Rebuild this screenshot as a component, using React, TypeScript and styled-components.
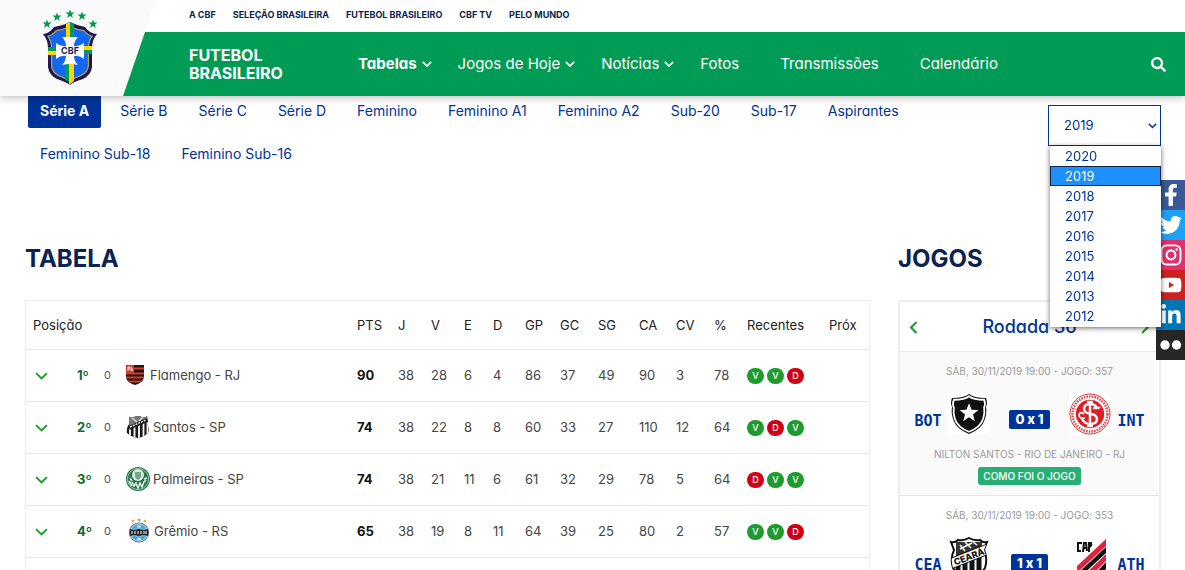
import React from "react";
import styled, { createGlobalStyle, css } from "styled-components";
import { FaSearch, FaFacebookF, FaTwitter, FaInstagram, FaYoutube, FaLinkedinIn } from "react-icons/fa";

const navy = "#0a2350";
const blue = "#003399";
const green = "#009b54";
const leaf = "#1e9b2e";

const GlobalStyle = createGlobalStyle`
  *, *::before, *::after { box-sizing: border-box; }
  body {
    margin: 0;
    background: #fff;
    color: #222;
    font-family: Inter, "Open Sans", sans-serif;
    font-feature-settings: "cv11", "calt" 0;
    font-size: 13px;
  }
  a { color: inherit; text-decoration: none; }
  ul { list-style: none; margin: 0; padding: 0; }
  button { font: inherit; border: 0; padding: 0; background: none; cursor: pointer; }
  svg { display: block; }
`;

/* ---------- header ---------- */

const Header = styled.header`
  position: relative;
  display: grid;
  grid-template-columns: 123px 1fr;
  grid-template-rows: 32px 64px;
  background: linear-gradient(#fff 32px, ${green} 32px);
  box-shadow: 0 2px 8px rgba(0, 0, 0, 0.25);
  z-index: 2;
`;

const LogoPanel = styled.div`
  position: absolute;
  top: 0;
  bottom: 0;
  left: 0;
  width: 156px;
  background: #fafafa;
  clip-path: polygon(0 0, 100% 0, 123px 100%, 0 100%);
`;

const LogoLink = styled.a`
  position: relative;
  grid-row: 1 / 3;
  padding: 10px 0 0 42px;
`;

const TopNav = styled.nav`
  display: flex;
  align-items: center;
  gap: 17px;
  padding: 0 0 2px 66px;
  color: ${navy};
  font-size: 9px;
  font-weight: 700;
  line-height: 12px;
`;

const MainBar = styled.div`
  display: flex;
  align-items: center;
  padding: 0 19px 0 66px;
  color: #fff;
`;

const SiteName = styled.a`
  width: 169px;
  font-size: 16px;
  line-height: 18px;
  font-weight: 700;
`;

const MainNav = styled.nav`
  display: flex;
  gap: 26px;
  font-size: 15px;
  line-height: 20px;
`;

const MainLink = styled.a<{ $active?: boolean }>`
  display: flex;
  align-items: center;
  gap: 5px;
  padding-right: 15px;
  font-weight: ${(p) => (p.$active ? 700 : 400)};
  svg { margin-right: -15px; }
`;

const SearchButton = styled.button`
  margin-left: auto;
  color: #fff;
`;

/* ---------- series tabs and year ---------- */

const Filters = styled.div`
  display: flex;
  justify-content: space-between;
  align-items: flex-start;
  padding: 0 24px 0 28px;
  color: ${blue};
`;

const Tabs = styled.nav`
  display: flex;
  flex-wrap: wrap;
  gap: 11px 7px;
  flex: 0 1 900px;
`;

const Tab = styled.a<{ $active?: boolean }>`
  height: 32px;
  padding: 0 12px 2px;
  font-size: 14px;
  line-height: 30px;
  border-radius: 0 0 2px 2px;
  ${(p) =>
    p.$active &&
    css`
      background: ${blue};
      color: #fff;
      font-weight: 700;
    `}
`;

const YearPicker = styled.div`
  position: relative;
  width: 113px;
  margin-top: 9px;
`;

const YearSelect = styled.select`
  appearance: none;
  display: block;
  width: 100%;
  height: 41px;
  padding: 0 15px 1px;
  border: 1px solid ${blue};
  border-radius: 0;
  background: #fff;
  color: ${blue};
  font: inherit;
`;

const SelectArrow = styled.span`
  position: absolute;
  right: 4px;
  top: 18px;
  pointer-events: none;
`;

const YearMenu = styled.ul`
  position: absolute;
  top: 41px;
  left: 2px;
  right: 0;
  z-index: 5;
  padding-bottom: 1px;
  background: #fff;
  box-shadow: 0 1px 5px rgba(0, 0, 0, 0.6);
`;

const YearOption = styled.li<{ $selected?: boolean }>`
  height: 20px;
  padding-left: 15px;
  line-height: 20px;
  color: ${blue};
  ${(p) =>
    p.$selected &&
    css`
      background: #1e90ff;
      color: #fff;
      box-shadow: inset 0 0 0 1px #10233c;
    `}
`;

/* ---------- content ---------- */

const Content = styled.main`
  display: grid;
  grid-template-columns: minmax(0, 1fr) 263px;
  gap: 28px;
  padding: 68px 24px 0 25px;
`;

const Heading = styled.h2`
  margin: 0 0 21px;
  color: ${navy};
  font-size: 24px;
  line-height: 40px;
  font-weight: 700;
`;

const TablePanel = styled.div`
  border: 1px solid #eee;
  padding-bottom: 52px;
`;

const Standings = styled.table`
  width: 100%;
  border-collapse: collapse;
  table-layout: fixed;
  color: #444;
  th, td {
    padding: 0 0 0 8px;
    text-align: left;
    font-weight: 400;
    white-space: nowrap;
    border-bottom: 1px solid #e8e8e8;
  }
  th:first-child { padding-left: 7px; }
  thead th { height: 48px; color: #222; }
  tbody th, tbody td { height: 52px; }
`;

const Col = styled.col<{ $w?: number }>`
  width: ${(p) => (p.$w ? `${p.$w}px` : "auto")};
`;

const Team = styled.div`
  display: flex;
  align-items: center;
  padding-left: 2px;
`;

const Expand = styled.button`
  width: 42px;
  padding-top: 2px;
  color: ${leaf};
`;

const Place = styled.strong`
  width: 27px;
  color: #0a6b2c;
`;

const Change = styled.span`
  width: 22px;
  color: #555;
  font-size: 11px;
`;

const CrestSlot = styled.span`
  margin-right: 3px;
`;

const Points = styled.strong`
  color: #111;
`;

const Results = styled.div`
  display: flex;
  gap: 3px;
  padding-top: 2px;
`;

const Result = styled.span<{ $win: boolean }>`
  width: 17px;
  height: 16px;
  border-radius: 8px;
  background: ${(p) => (p.$win ? leaf : "#cf0016")};
  color: #fff;
  font-size: 9px;
  line-height: 16px;
  font-weight: 500;
  text-align: center;
`;

const Games = styled.div`
  border: 2px solid #eee;
  border-bottom: 0;
  border-radius: 2px 2px 0 0;
`;

const Round = styled.div`
  display: flex;
  align-items: center;
  justify-content: space-between;
  height: 49px;
  padding: 0 10px;
`;

const RoundButton = styled.button`
  color: ${leaf};
  padding-top: 2px;
`;

const RoundTitle = styled.h3`
  margin: 0;
  color: ${blue};
  font-size: 18px;
  line-height: 24px;
  font-weight: 500;
`;

const Game = styled.article<{ $shaded?: boolean }>`
  display: flex;
  flex-direction: column;
  align-items: center;
  padding: 11px 0 10px;
  border-top: 1px solid #e6e6e6;
  background: ${(p) => (p.$shaded ? "#fafafa" : "#fff")};
`;

const GameInfo = styled.p`
  margin: 0;
  color: #999;
  font-size: 10px;
  line-height: 16px;
`;

const Match = styled.div`
  display: grid;
  grid-template-columns: 28px 42px 67px 42px 28px;
  column-gap: 6px;
  align-items: center;
  justify-items: center;
  height: 42px;
  margin: 14px 0 11px;
`;

const Code = styled.abbr`
  padding-top: 14px;
  color: ${blue};
  font-family: "DejaVu Sans Mono", monospace;
  font-size: 15px;
  line-height: 18px;
  font-weight: 700;
`;

const CrestBox = styled.span`
  background: #fff;
`;

const Score = styled.span`
  margin-top: 11px;
  padding: 0 6px;
  border-radius: 2px;
  background: ${blue};
  color: #fff;
  font-size: 13px;
  line-height: 19px;
  font-weight: 800;
`;

const ReportButton = styled.button`
  height: 18px;
  margin-top: 5px;
  padding: 0 5px;
  border-radius: 3px;
  background: #27b076;
  color: #fff;
  font-size: 10px;
  line-height: 18px;
  font-weight: 500;
`;

const Social = styled.aside`
  position: fixed;
  top: 180px;
  right: 0;
  width: 29px;
  z-index: 1;
`;

const SocialLink = styled.a<{ $bg: string }>`
  display: flex;
  align-items: center;
  justify-content: center;
  height: 30px;
  background: ${(p) => p.$bg};
  color: #fff;
  font-size: 22px;
`;

/* ---------- drawings ---------- */

type Dir = "down" | "left" | "right";
const paths: Record<Dir, string> = { down: "M1 1l5 5 5-5", left: "M6 1L1 6l5 5", right: "M1 1l5 5-5 5" };

function Chevron({ dir = "down", size = 9, weight = 2 }: { dir?: Dir; size?: number; weight?: number }) {
  const flat = dir === "down";
  return (
    <svg width={flat ? size : (size * 7) / 12} height={flat ? (size * 7) / 12 : size} viewBox={flat ? "0 0 12 7" : "0 0 7 12"} overflow="visible" fill="none" stroke="currentColor" strokeWidth={weight} aria-hidden="true">
      <path d={paths[dir]} />
    </svg>
  );
}

const star = "M0-4.6L1.2-1.5 4.5-1.4 1.9.7 2.8 3.9 0 2-2.8 3.9-1.9.7-4.5-1.4-1.2-1.5z";

function CbfLogo() {
  const shield = "M1 24Q7 24 12 17Q20 16 28 12Q36 16 43 17Q48 24 55 24Q50 30 50 38V57Q49 65 41 69Q31 72 28 75Q24 72 15 69Q7 65 6 57V38Q6 30 1 24z";
  return (
    <svg width="56" height="76" viewBox="0 0 56 76" role="img" aria-label="CBF">
      <defs>
        <clipPath id="cbf-inner">
          <path d="M5 26Q10 25 14 20Q22 19 28 16Q34 19 42 20Q46 25 51 26Q47 31 47 38V56Q46 63 39 66Q31 69 28 72Q24 69 16 66Q10 63 9 56V38Q9 31 5 26z" />
        </clipPath>
      </defs>
      <g fill={green}>
        {[[5, 14], [15, 7], [28, 4], [40, 6], [51, 14]].map(([x, y]) => (
          <path key={x} d={star} transform={`translate(${x} ${y})`} />
        ))}
      </g>
      <path d={shield} fill="#1d1757" />
      <g clipPath="url(#cbf-inner)">
        <rect width="56" height="76" fill="#1467f2" />
        <path d="M5 26Q10 25 14 20Q22 19 28 16Q34 19 42 20Q46 25 51 26Q47 31 47 38V56Q46 63 39 66Q31 69 28 72Q24 69 16 66Q10 63 9 56V38Q9 31 5 26z" fill="none" stroke="#b8a43c" strokeWidth="2.4" />
      </g>
      <path d="M24 14l4-2v50h-4z" fill="#ffd500" />
      <path d="M28 12l4 2v40h-4z" fill={green} />
      <path d="M23 52h5v20l-5-2z" fill={green} />
      <path d="M27 52h5v19l-5 4z" fill="#ffd500" />
      <path d="M6 41h10v4H6zM41 36h9v4h-9z" fill="#ffd500" />
      <path d="M6 37h10v4H6zM41 40h9v4h-9z" fill={green} />
      <path d="M20 27h16Q32 31 32 36Q37 37 42 33V49Q37 45 32 46Q32 51 36 55Q32 54 28 54Q24 54 20 55Q24 51 24 46Q19 45 14 49V33Q19 37 24 36Q24 31 20 27z" fill="#fff" />
      <text x="28" y="44" textAnchor="middle" fontSize="9" fontWeight="700" fill="#1d1757">CBF</text>
    </svg>
  );
}

function Flamengo() {
  return (
    <svg width="21" height="22" viewBox="1 0 21 22" role="img" aria-label="Flamengo">
      <clipPath id="fla"><path d="M1 1h18v12q-1 6-9 8Q2 19 1 13z" /></clipPath>
      <g clipPath="url(#fla)">
        <rect width="20" height="22" fill="#211414" />
        <path d="M0 4.500h20M0 9.500h20M0 13.500h20M0 17.500h20" stroke="#cc3b2c" strokeWidth="2" />
        <path d="M1 1h8v8H1z" fill="#d8392f" />
        <path d="M3 7V3h2M3 5h2M6 7V3l2 4" stroke="#fff" strokeWidth=".9" fill="none" />
      </g>
    </svg>
  );
}

function Santos() {
  return (
    <svg width="24" height="24" viewBox="0 0 24 24" role="img" aria-label="Santos">
      <clipPath id="san"><path d="M3 2q3 1 5 0 4-2 8 0 3 1 5-1l1 5-1 3q3 5 1 9-4 4-10 5-7-1-11-5-1-5 2-9z" /></clipPath>
      <g clipPath="url(#san)">
        <rect width="24" height="24" fill="#181818" />
        <path d="M4 10v14M8.500 9v15M13 8v16M17.500 7v16M21.500 7v16" stroke="#fff" strokeWidth="1.800" />
        <path d="M3 1h18v4L3 13z" fill="#777" />
        <path d="M3 13L21 5" stroke="#111" strokeWidth="4" />
        <path d="M4 12L20 5" stroke="#eee" strokeWidth="1.500" strokeDasharray="2 1" />
        <path d="M6 3l5 4M17 2l-4 4" stroke="#ddd" strokeWidth="1.500" />
      </g>
    </svg>
  );
}

function Palmeiras() {
  return (
    <svg width="24" height="24" viewBox="0 0 24 24" role="img" aria-label="Palmeiras">
      <circle cx="12" cy="12" r="12" fill="#25774b" />
      <circle cx="12" cy="12" r="10.600" fill="none" stroke="#cfe3d7" strokeWidth=".7" />
      <circle cx="12" cy="8" r="6" fill="#d9e8df" />
      <path d="M9 5h6v5q-1 2-3 3-2-1-3-3z" fill="#74a68a" />
      <path d="M3 14l3 5M6 15l2 4 2-3 2 5 2-5 2 4 2-5 2-2M4 11l2 3M18 12l3-1" stroke="#e7f1eb" strokeWidth="1.500" fill="none" />
    </svg>
  );
}

function Gremio() {
  return (
    <svg width="25" height="26" viewBox="0 0 25 26" role="img" aria-label="Grêmio">
      <circle cx="13" cy="14.500" r="10" fill="#4c4c52" />
      <circle cx="13" cy="14.500" r="8.800" fill="#33a9e8" stroke="#fff" strokeWidth=".8" />
      <path d="M3.500 10.500q5 2 9.500 0 4.500 2 9.500 0 1 4 0 8-5-2-9.500 0-4.500-2-9.500 0-1-4 0-8z" fill="#222" stroke="#ddd" strokeWidth=".6" />
      <path d="M6 13v3M9 13v3M12 13v3M15 13v3M18 13v3M20 13v3" stroke="#fff" />
      <path d="M11 7.500h4v2h-4zM11 20h4v2h-4z" fill="#cfeafa" />
      <g fill="#dfae3f">
        <path d={star} transform="translate(7 3) scale(.45)" />
        <path d={star} transform="translate(13 2) scale(.45)" fill="#999" />
        <path d={star} transform="translate(19 3) scale(.45)" />
      </g>
    </svg>
  );
}

function Botafogo() {
  const body = "M21 1q5 4 17 4 2 5 0 9 1 5-1 12-3 10-16 15Q8 36 5 26 3 19 4 14 2 10 4 5q12 0 17-4z";
  return (
    <svg width="42" height="42" viewBox="0 0 42 42" role="img" aria-label="Botafogo">
      <path d={body} fill="#111" />
      <path d={body} fill="#111" stroke="#fff" strokeWidth="2" transform="translate(2.300 2.300) scale(.89)" />
      <path d={star} fill="#fff" transform="translate(21 20) scale(2.100)" />
    </svg>
  );
}

function Internacional() {
  return (
    <svg width="42" height="42" viewBox="0 0 42 42" role="img" aria-label="Internacional">
      <circle cx="21" cy="21" r="20" fill="#fff" stroke="#d9363c" strokeWidth="1" />
      <circle cx="21" cy="21" r="17.500" fill="none" stroke="#dc4a50" strokeWidth="2.500" strokeDasharray="1.600 1.100" />
      <circle cx="21" cy="21" r="14.200" fill="#dd1f28" />
      <g fill="none" stroke="#fff" strokeWidth="2.400">
        <path d="M21 9v24M18 9h6M18 33h6" />
        <path d="M28 15q-2-4-7-4-6 0-6 5 0 4 7 5 6 1 6 5 0 5-7 5-5 0-8-5" />
        <path d="M15 21q-4-3-5 1 0 4 6 3M24 15q5 1 7-1" strokeWidth="1.800" />
      </g>
    </svg>
  );
}

function Ceara() {
  const body = "M3 5q4 1 7-2 6 1 11-2 5 3 11 2 3 3 7 2l-3 8q4 8 1 18-5 8-16 11Q9 39 5 31 2 21 6 13z";
  return (
    <svg width="42" height="42" viewBox="0 0 42 42" role="img" aria-label="Ceará">
      <clipPath id="cea"><path d={body} /></clipPath>
      <path d={body} fill="#fff" stroke="#111" strokeWidth="2" />
      <g clipPath="url(#cea)">
        <path d="M8 5h26v6L8 20z" fill="#333" />
        <path d="M12 8l5 6M17 5l6 6M25 5l4 3M12 12l12-6" stroke="#fff" strokeWidth="1.500" />
        <path d="M10 24v18M17 22v20M24 20v22M31 18v22" stroke="#111" strokeWidth="5" />
        <path d="M2 27L40 12" stroke="#111" strokeWidth="11" />
        <path d="M2 27L40 12" stroke="#fff" strokeWidth="9" />
      </g>
      <text x="21" y="23" transform="rotate(-21 21 20)" textAnchor="middle" fontSize="9" fontWeight="800" fill="#111">CEARÁ</text>
    </svg>
  );
}

function Athletico() {
  return (
    <svg width="42" height="42" viewBox="0 0 42 42" role="img" aria-label="Athletico">
      <path d="M8 29L37 2v7L8 36z" fill="#e2233c" />
      <path d="M8 37L37 10v6L9 42H8z" fill="#111" />
      <path d="M11 42L37 17v7L19 42z" fill="#e2233c" />
      <path d="M21 42L37 25v7L27 42z" fill="#111" />
      <g fill="none" stroke="#111" strokeWidth="2">
        <path d="M13 6H9v8h3M14 15l1-9h2l1 8M14 11h4M20 15V6h2q1 3-2 4" />
      </g>
    </svg>
  );
}

/* ---------- data ---------- */

const topLinks = ["A CBF", "SELEÇÃO BRASILEIRA", "FUTEBOL BRASILEIRO", "CBF TV", "PELO MUNDO"];
const mainLinks = [
  { label: "Tabelas", menu: true },
  { label: "Jogos de Hoje", menu: true },
  { label: "Notícias", menu: true },
  { label: "Fotos" },
  { label: "Transmissões" },
  { label: "Calendário" },
];
const series = ["Série A", "Série B", "Série C", "Série D", "Feminino", "Feminino A1", "Feminino A2", "Sub-20", "Sub-17", "Aspirantes", "Feminino Sub-18", "Feminino Sub-16"];
const years = [2020, 2019, 2018, 2017, 2016, 2015, 2014, 2013, 2012];
const columns: [string, number?][] = [
  ["Posição"], ["PTS", 41], ["J", 33], ["V", 33], ["E", 29], ["D", 32], ["GP", 35], ["GC", 38],
  ["SG", 41], ["CA", 37], ["CV", 38], ["%", 33], ["Recentes", 82], ["Próx", 48],
];
const teams = [
  { name: "Flamengo - RJ", crest: <Flamengo />, pts: 90, stats: [38, 28, 6, 4, 86, 37, 49, 90, 3, 78], recent: "VVD" },
  { name: "Santos - SP", crest: <Santos />, pts: 74, stats: [38, 22, 8, 8, 60, 33, 27, 110, 12, 64], recent: "VDV" },
  { name: "Palmeiras - SP", crest: <Palmeiras />, pts: 74, stats: [38, 21, 11, 6, 61, 32, 29, 78, 5, 64], recent: "DVV" },
  { name: "Grêmio - RS", crest: <Gremio />, pts: 65, stats: [38, 19, 8, 11, 64, 39, 25, 80, 2, 57], recent: "VVD" },
];
const social = [
  { name: "Facebook", bg: "#3b5998", icon: <FaFacebookF /> },
  { name: "Twitter", bg: "#1da1f2", icon: <FaTwitter /> },
  { name: "Instagram", bg: "#e1306c", icon: <FaInstagram size={24} /> },
  { name: "YouTube", bg: "#cd201f", icon: <FaYoutube /> },
  { name: "LinkedIn", bg: "#0077b5", icon: <FaLinkedinIn /> },
];

export default function App() {
  return (
    <>
      <GlobalStyle />
      <Header>
        <LogoPanel />
        <LogoLink href="#"><CbfLogo /></LogoLink>
        <TopNav aria-label="Institucional">
          {topLinks.map((t) => <a key={t} href="#">{t}</a>)}
        </TopNav>
        <MainBar>
          <SiteName href="#">FUTEBOL<br />BRASILEIRO</SiteName>
          <MainNav aria-label="Principal">
            {mainLinks.map((l, i) => (
              <MainLink key={l.label} href="#" $active={i === 0}>
                {l.label}
                {l.menu && <Chevron size={10} />}
              </MainLink>
            ))}
          </MainNav>
          <SearchButton aria-label="Buscar"><FaSearch size={15} /></SearchButton>
        </MainBar>
      </Header>

      <Filters>
        <Tabs aria-label="Campeonatos">
          {series.map((s, i) => <Tab key={s} href="#" $active={i === 0}>{s}</Tab>)}
        </Tabs>
        <YearPicker>
          <YearSelect aria-label="Ano" defaultValue="2019">
            {years.map((y) => <option key={y}>{y}</option>)}
          </YearSelect>
          <SelectArrow><Chevron /></SelectArrow>
          <YearMenu role="listbox" aria-label="Ano">
            {years.map((y) => (
              <YearOption key={y} role="option" aria-selected={y === 2019} $selected={y === 2019}>{y}</YearOption>
            ))}
          </YearMenu>
        </YearPicker>
      </Filters>

      <Content>
        <section>
          <Heading>TABELA</Heading>
          <TablePanel>
            <Standings>
              <colgroup>{columns.map(([n, w]) => <Col key={n} $w={w} />)}</colgroup>
              <thead>
                <tr>{columns.map(([n]) => <th key={n} scope="col">{n}</th>)}</tr>
              </thead>
              <tbody>
                {teams.map((t, i) => (
                  <tr key={t.name}>
                    <th scope="row">
                      <Team>
                        <Expand aria-label={`Detalhes ${t.name}`}><Chevron size={13} weight={1.7} /></Expand>
                        <Place>{i + 1}º</Place>
                        <Change>0</Change>
                        <CrestSlot>{t.crest}</CrestSlot>
                        {t.name}
                      </Team>
                    </th>
                    <td><Points>{t.pts}</Points></td>
                    {t.stats.map((v, k) => <td key={k}>{v}</td>)}
                    <td>
                      <Results>
                        {t.recent.split("").map((r, k) => <Result key={k} $win={r === "V"}>{r}</Result>)}
                      </Results>
                    </td>
                    <td />
                  </tr>
                ))}
              </tbody>
            </Standings>
          </TablePanel>
        </section>

        <section>
          <Heading>JOGOS</Heading>
          <Games>
            <Round>
              <RoundButton aria-label="Rodada anterior"><Chevron dir="left" size={13} /></RoundButton>
              <RoundTitle>Rodada 36</RoundTitle>
              <RoundButton aria-label="Próxima rodada"><Chevron dir="right" size={13} /></RoundButton>
            </Round>
            <Game $shaded>
              <GameInfo>SÁB, 30/11/2019 19:00 - JOGO: 357</GameInfo>
              <Match>
                <Code>BOT</Code>
                <CrestBox><Botafogo /></CrestBox>
                <Score>0 x 1</Score>
                <CrestBox><Internacional /></CrestBox>
                <Code>INT</Code>
              </Match>
              <GameInfo>NILTON SANTOS - RIO DE JANEIRO - RJ</GameInfo>
              <ReportButton>COMO FOI O JOGO</ReportButton>
            </Game>
            <Game>
              <GameInfo>SÁB, 30/11/2019 19:00 - JOGO: 353</GameInfo>
              <Match>
                <Code>CEA</Code>
                <CrestBox><Ceara /></CrestBox>
                <Score>1 x 1</Score>
                <CrestBox><Athletico /></CrestBox>
                <Code>ATH</Code>
              </Match>
            </Game>
          </Games>
        </section>
      </Content>

      <Social aria-label="Redes sociais">
        {social.map((s) => <SocialLink key={s.name} href="#" aria-label={s.name} $bg={s.bg}>{s.icon}</SocialLink>)}
        <SocialLink href="#" aria-label="Flickr" $bg="#262626">
          <svg width="22" height="10" viewBox="0 0 22 10" fill="currentColor" aria-hidden="true">
            <circle cx="5" cy="5" r="4.700" /><circle cx="16.500" cy="5" r="4.700" />
          </svg>
        </SocialLink>
      </Social>
    </>
  );
}
